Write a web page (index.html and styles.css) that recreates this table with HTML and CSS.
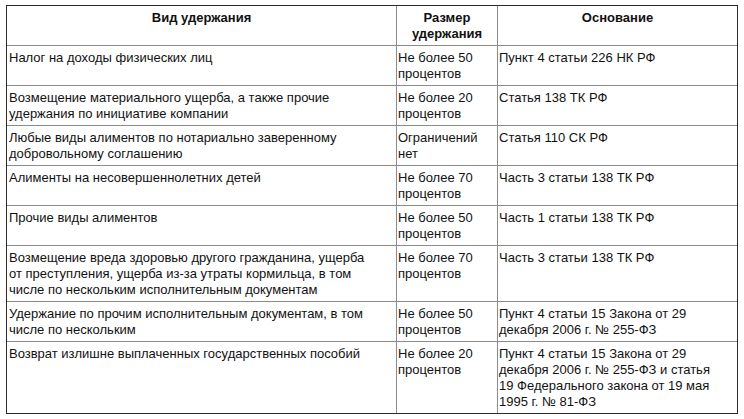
FILE: index.html
```html
<!DOCTYPE html>
<html lang="ru">
<head>
<meta charset="utf-8">
<title>Виды удержаний</title>
<link rel="stylesheet" href="styles.css">
</head>
<body>
<table class="deductions">
  <colgroup>
    <col class="col-type">
    <col class="col-size">
    <col class="col-basis">
  </colgroup>
  <thead>
    <tr>
      <th>Вид удержания</th>
      <th>Размер удержания</th>
      <th>Основание</th>
    </tr>
  </thead>
  <tbody>
    <tr>
      <td>Налог на доходы физических лиц</td>
      <td>Не более 50 процентов</td>
      <td>Пункт 4 статьи 226 НК РФ</td>
    </tr>
    <tr>
      <td>Возмещение материального ущерба, а также прочие удержания по инициативе компании</td>
      <td>Не более 20 процентов</td>
      <td>Статья 138 ТК РФ</td>
    </tr>
    <tr>
      <td>Любые виды алиментов по нотариально заверенному добровольному соглашению</td>
      <td>Ограничений нет</td>
      <td>Статья 110 СК РФ</td>
    </tr>
    <tr>
      <td>Алименты на несовершеннолетних детей</td>
      <td>Не более 70 процентов</td>
      <td>Часть 3 статьи 138 ТК РФ</td>
    </tr>
    <tr>
      <td>Прочие виды алиментов</td>
      <td>Не более 50 процентов</td>
      <td>Часть 1 статьи 138 ТК РФ</td>
    </tr>
    <tr>
      <td>Возмещение вреда здоровью другого гражданина, ущерба<br>от преступления, ущерба из-за утраты кормильца, в том<br>числе по нескольким исполнительным документам</td>
      <td>Не более 70 процентов</td>
      <td>Часть 3 статьи 138 ТК РФ</td>
    </tr>
    <tr>
      <td>Удержание по прочим исполнительным документам, в том<br>числе по нескольким</td>
      <td>Не более 50 процентов</td>
      <td>Пункт 4 статьи 15 Закона от 29 декабря 2006 г. № 255-ФЗ</td>
    </tr>
    <tr>
      <td>Возврат излишне выплаченных государственных пособий</td>
      <td>Не более 20 процентов</td>
      <td>Пункт 4 статьи 15 Закона от 29<br>декабря 2006 г. № 255-ФЗ и статья<br>19 Федерального закона от 19 мая<br>1995 г. № 81-ФЗ</td>
    </tr>
  </tbody>
</table>
</body>
</html>
```

FILE: styles.css
```css
html, body {
  margin: 0;
  background: #fff;
}

body {
  padding: 5px 0 0 6px;
  font-family: "Liberation Sans", Arial, sans-serif;
  font-size: 13px;
  line-height: 16px;
  color: #111;
}

.deductions {
  width: 730px;
  table-layout: fixed;
  border-collapse: separate;
  border-spacing: 0;
  border: 1px solid #2b2b2b;
}

.col-type { width: 390px; }
.col-size { width: 101px; }
.col-basis { width: 239px; }

.deductions th,
.deductions td {
  vertical-align: top;
  padding: 4px 2px 3px 2px;
  border-right: 1px solid #8c8c8c;
  border-bottom: 1px solid #8c8c8c;
  text-align: left;
}

.deductions th {
  font-weight: bold;
  text-align: center;
}

.deductions td:nth-child(2),
.deductions td:nth-child(3) {
  padding-left: 1px;
}

.deductions tr > :last-child {
  border-right: none;
}

.deductions tbody tr:last-child td {
  border-bottom: none;
}
```
